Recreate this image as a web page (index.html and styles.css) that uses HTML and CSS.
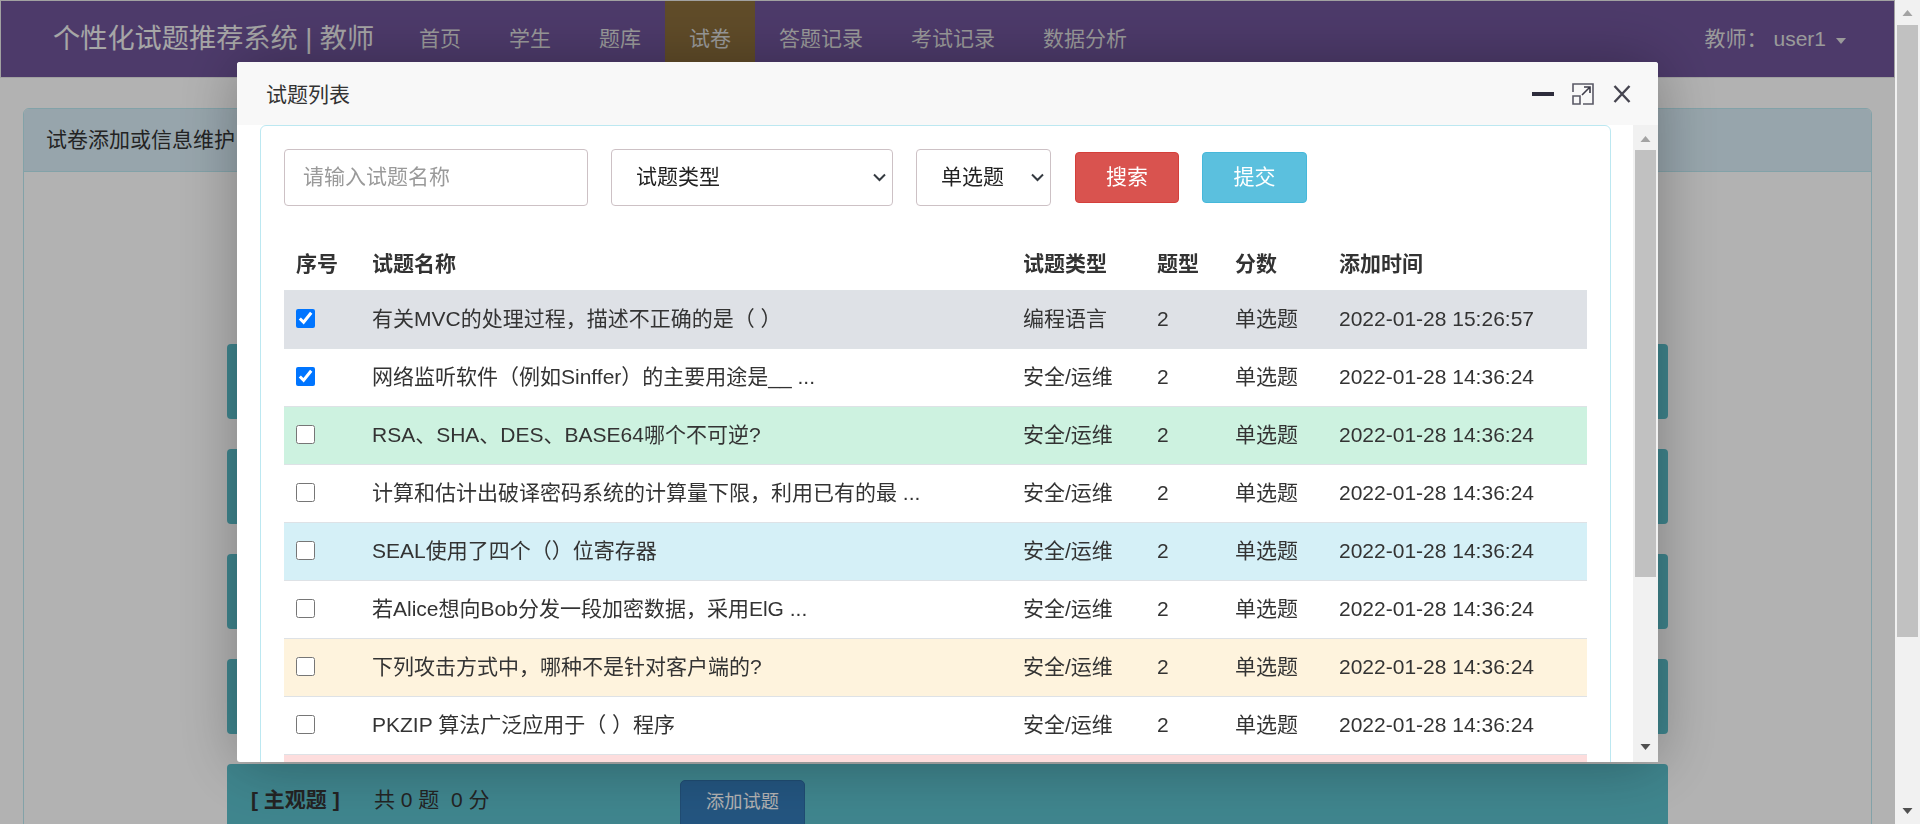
FILE: index.html
```html
<!DOCTYPE html>
<html lang="zh-CN">
<head>
<meta charset="utf-8">
<title>试题列表</title>
<link rel="stylesheet" href="styles.css">
</head>
<body>
<div class="page">
  <div class="main">
    <nav class="navbar">
      <a class="brand">个性化试题推荐系统 | 教师</a>
      <ul class="nav-links">
        <li>首页</li><li>学生</li><li>题库</li><li class="active">试卷</li><li>答题记录</li><li>考试记录</li><li>数据分析</li>
      </ul>
      <div class="nav-user"><span>教师&#xFF1A;</span><span class="user-name">user1</span><i class="caret"></i></div>
    </nav>
    <section class="panel">
      <header class="panel-heading">试卷添加或信息维护</header>
      <div class="panel-body">
        <div class="bar"></div>
        <div class="bar"></div>
        <div class="bar"></div>
        <div class="bar"></div>
        <div class="bar bar-text">
          <b class="bar-title">[ 主观题 ]</b>
          <span class="bar-count">共 0 题&nbsp; 0 分</span>
          <button class="add-btn">添加试题</button>
        </div>
      </div>
    </section>
  </div>
  <div class="scrollbar page-scroll">
    <svg class="arrow" viewBox="0 0 10 6" width="11" height="6"><path d="M5 0L10 6H0Z" fill="#a3a3a3"/></svg>
    <div class="track"><div class="thumb page-thumb"></div></div>
    <svg class="arrow" viewBox="0 0 10 6" width="11" height="6"><path d="M0 0H10L5 6Z" fill="#505050"/></svg>
  </div>
</div>
<div class="overlay"></div>
<div class="modal">
  <header class="modal-title">
    <span class="modal-name">试题列表</span>
    <div class="modal-tools">
      <svg width="22" height="4" viewBox="0 0 22 4"><rect width="22" height="4" fill="#2e2d3c"/></svg>
      <svg width="22" height="22" viewBox="0 0 22 22" fill="none" stroke="#5a5966" stroke-width="1.6"><path d="M1 9V1H21V21H11"/><path d="M1 13H8V21H1Z"/><path d="M10 12L18 4M12 4H18V10" stroke="#3c3b48"/></svg>
      <svg width="20" height="18" viewBox="0 0 20 18" fill="none" stroke="#45444f" stroke-width="2.4"><path d="M2.5 1L17.5 17M17.5 1L2.5 17"/></svg>
    </div>
  </header>
  <div class="modal-content">
    <div class="modal-scroller">
      <div class="card">
        <form class="filters">
          <input class="field field-name" type="text" placeholder="请输入试题名称">
          <div class="select-wrap wrap-type">
            <select class="field field-select"><option>试题类型</option></select>
            <svg class="chevron" width="13" height="9" viewBox="0 0 13 9" fill="none" stroke="#343a40" stroke-width="2"><path d="M1 1.5L6.5 7L12 1.5"/></svg>
          </div>
          <div class="select-wrap wrap-kind">
            <select class="field field-select"><option>单选题</option></select>
            <svg class="chevron" width="13" height="9" viewBox="0 0 13 9" fill="none" stroke="#343a40" stroke-width="2"><path d="M1 1.5L6.5 7L12 1.5"/></svg>
          </div>
          <button type="button" class="btn btn-danger">搜索</button>
          <button type="button" class="btn btn-info">提交</button>
        </form>
        <table class="table">
          <colgroup>
            <col class="c-no"><col class="c-name"><col class="c-type"><col class="c-kind"><col class="c-score"><col>
          </colgroup>
          <thead>
            <tr><th>序号</th><th>试题名称</th><th>试题类型</th><th>题型</th><th>分数</th><th>添加时间</th></tr>
          </thead>
          <tbody>
            <tr class="row-gray"><td><input class="check" type="checkbox" checked></td><td>有关MVC的处理过程&#xFF0C;描述不正确的是&#xFF08; &#xFF09;</td><td>编程语言</td><td>2</td><td>单选题</td><td>2022-01-28 15:26:57</td></tr>
            <tr><td><input class="check" type="checkbox" checked></td><td>网络监听软件&#xFF08;例如Sinffer&#xFF09;的主要用途是__ ...</td><td>安全/运维</td><td>2</td><td>单选题</td><td>2022-01-28 14:36:24</td></tr>
            <tr class="row-green"><td><input class="check" type="checkbox"></td><td>RSA、SHA、DES、BASE64哪个不可逆?</td><td>安全/运维</td><td>2</td><td>单选题</td><td>2022-01-28 14:36:24</td></tr>
            <tr><td><input class="check" type="checkbox"></td><td>计算和估计出破译密码系统的计算量下限&#xFF0C;利用已有的最 ...</td><td>安全/运维</td><td>2</td><td>单选题</td><td>2022-01-28 14:36:24</td></tr>
            <tr class="row-blue"><td><input class="check" type="checkbox"></td><td>SEAL使用了四个&#xFF08;&#xFF09;位寄存器</td><td>安全/运维</td><td>2</td><td>单选题</td><td>2022-01-28 14:36:24</td></tr>
            <tr><td><input class="check" type="checkbox"></td><td>若Alice想向Bob分发一段加密数据&#xFF0C;采用ElG ...</td><td>安全/运维</td><td>2</td><td>单选题</td><td>2022-01-28 14:36:24</td></tr>
            <tr class="row-cream"><td><input class="check" type="checkbox"></td><td>下列攻击方式中&#xFF0C;哪种不是针对客户端的?</td><td>安全/运维</td><td>2</td><td>单选题</td><td>2022-01-28 14:36:24</td></tr>
            <tr><td><input class="check" type="checkbox"></td><td>PKZIP 算法广泛应用于&#xFF08; &#xFF09;程序</td><td>安全/运维</td><td>2</td><td>单选题</td><td>2022-01-28 14:36:24</td></tr>
            <tr class="row-pink"><td></td><td></td><td></td><td></td><td></td><td></td></tr>
          </tbody>
        </table>
      </div>
    </div>
    <div class="scrollbar modal-scroll">
      <svg class="arrow" viewBox="0 0 10 6" width="11" height="6"><path d="M5 0L10 6H0Z" fill="#a3a3a3"/></svg>
      <div class="track"><div class="thumb modal-thumb"></div></div>
      <svg class="arrow" viewBox="0 0 10 6" width="11" height="6"><path d="M0 0H10L5 6Z" fill="#505050"/></svg>
    </div>
  </div>
</div>
</body>
</html>
```
FILE: styles.css
```css
* { box-sizing: border-box; }
html, body { margin: 0; height: 100%; overflow: hidden; }
body {
  font-family: "Liberation Sans", "Noto Sans CJK SC", sans-serif;
  font-size: 21px;
  line-height: 1.5;
  color: #333;
  background: #fff;
}
.page { display: flex; height: 824px; overflow: hidden; }
.main { flex: 1; min-width: 0; overflow: hidden; }

/* fake native scrollbars */
.scrollbar {
  width: 25px;
  flex: none;
  background: #f1f1f1;
  display: flex;
  flex-direction: column;
  align-items: center;
}
.arrow { flex: none; display: block; }
.track { flex: 1; width: 100%; padding: 0 2px; }
.thumb { background: #c1c1c1; }
.page-scroll { padding: 10px 0; }
.page-scroll .track { margin: 9px 0 0; }
.page-thumb { height: 612px; }
.modal-scroll { padding: 11px 0 12px; }
.modal-scroll .track { margin: 8px 0 0; }
.modal-thumb { height: 427px; }

/* navbar */
.navbar {
  height: 78px;
  display: flex;
  align-items: stretch;
  background: #6f5499;
  border: 1px solid #e7e7e7;
  color: #ddd;
}
.brand { font-size: 27.2px; padding-left: 52px; width: 394px; line-height: 76px; color: #eee; white-space: nowrap; }
.nav-links { display: flex; list-style: none; margin: 0; padding: 0; }
.nav-links li { padding: 0 24px; line-height: 76px; white-space: nowrap; }
.nav-links .active { background: #8a6d3b; }
.nav-user { margin-left: auto; padding-right: 48px; display: flex; align-items: center; line-height: 76px; }
.user-name { margin-left: 6px; }
.caret {
  display: block;
  margin: 4px 0 0 10px;
  border-top: 6px solid #ddd;
  border-left: 5.5px solid transparent;
  border-right: 5.5px solid transparent;
}

/* page panel */
.panel {
  margin: 30px 23px 0 23px;
  border: 1px solid #bce8f1;
  border-radius: 6px;
}
.panel-heading {
  height: 63px;
  padding: 0 22px;
  line-height: 62px;
  background: #d9edf7;
  border-bottom: 1px solid #bce8f1;
  border-radius: 5px 5px 0 0;
  color: #333;
}
.panel-body {
  display: flex;
  flex-direction: column;
  align-items: center;
  gap: 30px;
  padding-top: 172px;
  height: 800px;
}
.bar {
  width: 1441px;
  height: 75px;
  flex: none;
  background: #5bbfcb;
  border-radius: 4px;
}
.bar-text { display: flex; align-items: flex-start; padding: 20px 0 0 24px; }
.bar-title { width: 123px; color: #333; }
.bar-count { width: 306px; color: #333; }
.add-btn {
  width: 125px;
  height: 56px;
  margin-top: -4px;
  background: #337ab7;
  border: 1px solid #2e6da4;
  border-radius: 5px;
  color: #fff;
  font: inherit;
  font-size: 18.2px;
  padding: 0 0 10px;
}

/* overlay and modal */
.overlay { position: fixed; inset: 0 25px 0 0; background: rgba(0, 0, 0, .3); }
.modal {
  position: fixed;
  left: 237px;
  top: 62px;
  width: 1421px;
  height: 700px;
  background: #fff;
  border-radius: 3px;
  box-shadow: 1px 1px 62px rgba(0, 0, 0, .3);
  display: flex;
  flex-direction: column;
}
.modal-title {
  height: 63px;
  flex: none;
  display: flex;
  align-items: center;
  justify-content: space-between;
  padding: 0 26px 0 29px;
  background: #f8f8f8;
  border-radius: 3px 3px 0 0;
}
.modal-name { padding-top: 2px; }
.modal-tools { display: flex; align-items: center; gap: 18px; }
.modal-content { flex: 1; min-height: 0; display: flex; overflow: hidden; }
.modal-scroller { flex: 1; min-width: 0; overflow: hidden; padding: 0 22px 0 23px; }
.card {
  height: 700px;
  border: 1px solid #bce8f1;
  border-radius: 6px;
  padding: 22px 23px 0;
}
.filters { display: flex; align-items: center; height: 58px; }
.field {
  height: 57px;
  background: #fff;
  border: 1px solid #cdc1c5;
  border-radius: 4px;
  font: inherit;
  color: #222;
}
.field-name { width: 304px; padding: 0 18px; }
.field-name::placeholder { color: #9a9a9a; }
.select-wrap { position: relative; margin-left: 23px; }
.wrap-type { width: 282px; }
.wrap-kind { width: 135px; }
.field-select { width: 100%; appearance: none; padding: 0 24px; }
.chevron { position: absolute; right: 7px; top: 24px; pointer-events: none; }
.btn {
  height: 51px;
  border-radius: 4px;
  font: inherit;
  color: #fff;
  padding: 0;
}
.btn-danger { width: 104px; margin-left: 24px; background: #d9534f; border: 1px solid #d43f3a; }
.btn-info { width: 105px; margin-left: 23px; background: #5bc0de; border: 1px solid #46b8da; }

/* table */
.table { width: 1303px; margin-top: 26px; border-collapse: collapse; table-layout: fixed; }
.c-no { width: 76px; }
.c-name { width: 651px; }
.c-type { width: 134px; }
.c-kind { width: 78px; }
.c-score { width: 104px; }
.table th { height: 58px; padding: 5px 12px 0; text-align: left; font-weight: 700; }
.table td { height: 58px; padding: 0 12px; border-top: 1px solid #dee2e6; vertical-align: middle; white-space: nowrap; }
.check { display: block; width: 19px; height: 19px; margin: -2px 0 0; accent-color: #0075ff; }
.row-gray td { background: #dee1e6; }
.row-green td { background: #cdf2e0; }
.row-blue td { background: #d5f0f7; }
.row-cream td { background: #fef3dd; }
.row-pink td { background: #fddddd; }
```
